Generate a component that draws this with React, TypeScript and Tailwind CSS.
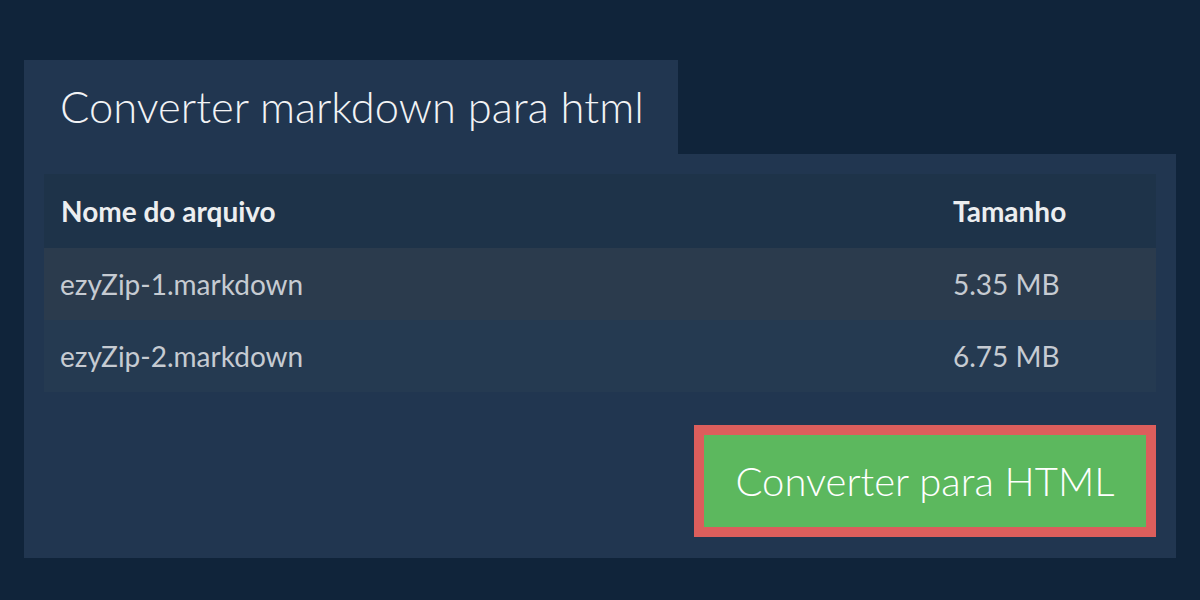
const files = [
  { name: 'ezyZip-1.markdown', size: '5.35 MB' },
  { name: 'ezyZip-2.markdown', size: '6.75 MB' },
];

export default function App() {
  return (
    <div
      className="h-[600px] w-[1200px] bg-[#10243a] px-6 pt-[60px]"
      style={{ fontFamily: 'Lato, "Noto Sans", sans-serif' }}
    >
      <div className="flex">
        <h1 className="flex h-[94px] w-[654px] items-center bg-[#213650] pl-9 text-[43.5px] font-light text-[#f2f3f5]">
          Converter markdown para html
        </h1>
      </div>
      <div className="h-[404px] bg-[#213650] px-5 pt-5">
        <div className="grid grid-cols-[1fr_203px]">
          <div className="flex h-[74px] items-center bg-[#1e3349] pl-[17px] text-[28px] font-bold text-[#eceef0]">
            Nome do arquivo
          </div>
          <div className="flex h-[74px] items-center bg-[#1e3349] text-[28px] font-bold text-[#eceef0]">
            Tamanho
          </div>
          {files.map((f, i) => (
            <div key={f.name} className="contents">
              <div
                className={`flex h-[72px] items-center pl-4 text-[28px] text-[#c6cbd2] ${
                  i === 0 ? 'bg-[#2b3b4d]' : 'bg-[#253a51]'
                }`}
              >
                {f.name}
              </div>
              <div
                className={`flex h-[72px] items-center text-[28px] text-[#c6cbd2] ${
                  i === 0 ? 'bg-[#2b3b4d]' : 'bg-[#253a51]'
                }`}
              >
                {f.size}
              </div>
            </div>
          ))}
        </div>
        <div className="mt-[33px] flex justify-end">
          <button className="h-[112px] w-[462px] border-[10px] border-[#dc5e5c] bg-[#5cb85e] text-[40px] font-light text-white">
            Converter para HTML
          </button>
        </div>
      </div>
    </div>
  );
}
